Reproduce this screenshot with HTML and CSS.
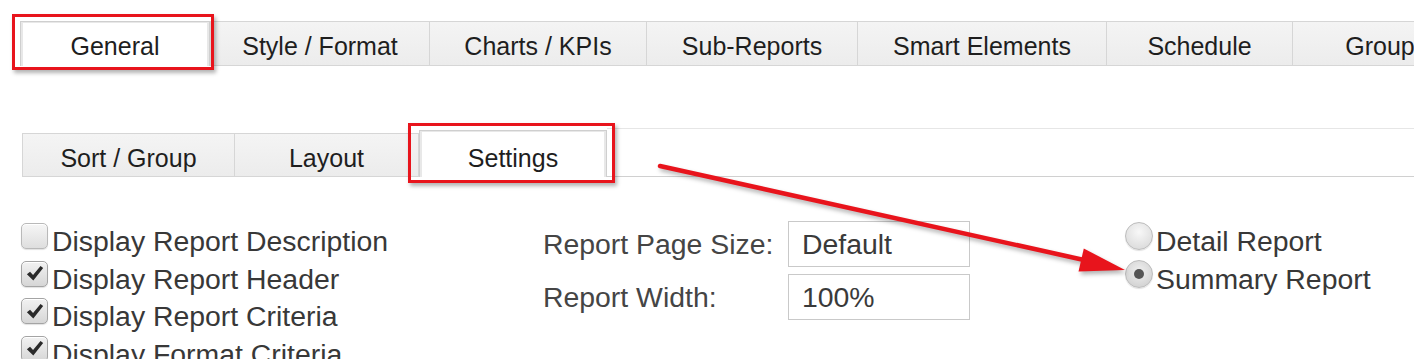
FILE: index.html
```html
<!DOCTYPE html>
<html lang="en">
<head>
<meta charset="utf-8">
<title>Report Settings</title>
<link rel="stylesheet" href="styles.css">
</head>
<body>
<div class="page">
  <nav class="tabs tabs--main">
    <div class="tab tab--active tab--general">General</div>
    <div class="tab tab--style">Style / Format</div>
    <div class="tab tab--charts">Charts / KPIs</div>
    <div class="tab tab--sub">Sub-Reports</div>
    <div class="tab tab--smart">Smart Elements</div>
    <div class="tab tab--schedule">Schedule</div>
    <div class="tab tab--group">Group</div>
  </nav>

  <nav class="tabs tabs--secondary">
    <div class="subtab subtab--sort">Sort / Group</div>
    <div class="subtab subtab--layout">Layout</div>
    <div class="subtab subtab--active subtab--settings">Settings</div>
    <div class="subtab-fill"></div>
  </nav>

  <section class="settings">
    <div class="col col--checks">
      <div class="opt"><span class="box"></span><span>Display Report Description</span></div>
      <div class="opt"><span class="box box--on"><svg viewBox="0 0 16 16"><path d="M2.2 8.6 L4.6 6.6 L6.9 9.2 L12.6 2.3 L14.6 3.9 L7.1 13.4 Z"/></svg></span><span>Display Report Header</span></div>
      <div class="opt"><span class="box box--on"><svg viewBox="0 0 16 16"><path d="M2.2 8.6 L4.6 6.6 L6.9 9.2 L12.6 2.3 L14.6 3.9 L7.1 13.4 Z"/></svg></span><span>Display Report Criteria</span></div>
      <div class="opt"><span class="box box--on"><svg viewBox="0 0 16 16"><path d="M2.2 8.6 L4.6 6.6 L6.9 9.2 L12.6 2.3 L14.6 3.9 L7.1 13.4 Z"/></svg></span><span>Display Format Criteria</span></div>
    </div>

    <div class="col col--fields">
      <div class="field"><span class="field-label">Report Page Size:</span><span class="field-input">Default</span></div>
      <div class="field"><span class="field-label">Report Width:</span><span class="field-input">100%</span></div>
    </div>

    <div class="col col--radios">
      <div class="opt"><span class="radio"></span><span>Detail Report</span></div>
      <div class="opt"><span class="radio radio--on"></span><span>Summary Report</span></div>
    </div>
  </section>

  <div class="callout callout--general"></div>
  <div class="callout callout--settings"></div>
  <svg class="arrow" viewBox="0 0 1414 359" width="1414" height="359">
    <line x1="660" y1="166" x2="1084" y2="260" />
    <polygon points="1125,270 1078.5,271.5 1083.8,248.5" />
  </svg>
</div>
</body>
</html>
```

FILE: styles.css
```css
* { box-sizing: border-box; }

html, body {
  margin: 0;
  padding: 0;
  background: #fff;
}

body {
  font-family: "Liberation Sans", Arial, sans-serif;
  color: #333;
}

.page {
  position: relative;
  width: 1414px;
  height: 359px;
  overflow: hidden;
}

/* ---------- main tabs ---------- */
.tabs {
  display: flex;
  white-space: nowrap;
}

.tabs--main {
  margin: 21px 0 0 20px;
  height: 45px;
}

.tab {
  flex: 0 0 auto;
  height: 45px;
  padding-top: 4px;
  line-height: 40px;
  text-align: center;
  font-size: 25px;
  color: #1e1e1e;
  background: linear-gradient(#f4f4f4, #ececec);
  border: 1px solid #d6d6d6;
  border-left: none;
}

.tab--active {
  background: #fff;
  border: 1px solid #cfcfcf;
  border-bottom: none;
  box-shadow: inset 2px 1px 0 #e8e8e8, inset -2px 0 0 #e8e8e8;
}

.tab--general { width: 190px; }
.tab--style { width: 220px; border-left: 1px solid #d6d6d6; }
.tab--charts { width: 217px; }
.tab--sub { width: 211px; }
.tab--smart { width: 249px; }
.tab--schedule { width: 186px; }
.tab--group { width: 175px; }

/* ---------- secondary tabs ---------- */
.tabs--secondary {
  margin: 62px 0 0 22px;
  height: 49px;
  align-items: flex-end;
}

.subtab {
  flex: 0 0 auto;
  height: 44px;
  padding-top: 4px;
  line-height: 40px;
  text-align: center;
  font-size: 25px;
  color: #1e1e1e;
  background: linear-gradient(#f4f4f4, #ececec);
  border: 1px solid #d6d6d6;
  border-left: none;
}

.subtab--sort { width: 213px; border-left: 1px solid #d6d6d6; }
.subtab--layout { width: 184px; }

.subtab--active {
  background: #fff;
  height: 47px;
  padding-top: 7px;
  line-height: 40px;
  border: 1px solid #cfcfcf;
  border-bottom: none;
  box-shadow: inset 2px 1px 0 #e8e8e8, inset -2px 0 0 #e8e8e8;
}

.subtab--settings { width: 188px; }

.subtab-fill {
  flex: 1 1 auto;
  height: 49px;
  border-top: 1px solid #e6e6e6;
  border-bottom: 1px solid #d0d0d0;
}

/* ---------- settings body ---------- */
.settings {
  display: grid;
  grid-template-columns: 522px 582px 1fr;
  margin: 44px 0 0 21px;
  font-size: 28.4px;
  color: #383838;
}

.col--checks,
.col--radios {
  padding-top: 2px;
}

.opt {
  display: flex;
  align-items: flex-start;
  height: 37.5px;
  line-height: 37px;
  white-space: nowrap;
}

.box {
  flex: 0 0 auto;
  width: 27px;
  height: 26px;
  margin: 0 4px 0 0;
  border: 1px solid #b9b9b9;
  border-radius: 5px;
  background: linear-gradient(#f6f6f6, #dedede);
  box-shadow: inset 0 1px 0 #fff, 0 1px 1px rgba(0,0,0,.12);
  display: flex;
  align-items: center;
  justify-content: center;
}

.box--on {
  border-color: #a4a4a4;
  background: linear-gradient(#f2f2f2, #d6d6d6);
}

.box svg {
  width: 21px;
  height: 21px;
  fill: #2a2a2a;
}

.radio {
  position: relative;
  flex: 0 0 auto;
  width: 28px;
  height: 28px;
  margin: -1px 3px 0 0;
  border: 1px solid #bcbcbc;
  border-radius: 50%;
  background: radial-gradient(circle at 50% 35%, #f8f8f8, #dcdcdc 80%);
  box-shadow: 0 1px 1px rgba(0,0,0,.12);
}

.radio--on {
  background: radial-gradient(circle at 50% 40%, #f0f0f0, #d2d2d2 80%);
}

.radio--on::after {
  content: "";
  position: absolute;
  left: 8px;
  top: 8px;
  width: 10px;
  height: 10px;
  border-radius: 50%;
  background: #555;
}

.field {
  display: flex;
  align-items: center;
  height: 46px;
  margin-bottom: 7px;
}

.field-label {
  width: 245px;
  color: #454545;
}

.field-input {
  width: 182px;
  height: 46px;
  line-height: 44px;
  padding-left: 13px;
  border: 1px solid #c9c9c9;
  background: #fff;
  color: #3a3a3a;
}

/* ---------- annotations ---------- */
.callout {
  position: absolute;
  border: 3px solid #e8141c;
  box-shadow: 2px 3px 4px rgba(0,0,0,.3);
}

.callout--general {
  left: 12px;
  top: 14px;
  width: 202px;
  height: 56px;
}

.callout--settings {
  left: 408px;
  top: 123px;
  width: 207px;
  height: 60px;
}

.arrow {
  position: absolute;
  left: 0;
  top: 0;
  filter: drop-shadow(2px 3px 2px rgba(0,0,0,.3));
}

.arrow line {
  stroke: #e8141c;
  stroke-width: 4.5;
  stroke-linecap: round;
}

.arrow polygon {
  fill: #e8141c;
}
```
